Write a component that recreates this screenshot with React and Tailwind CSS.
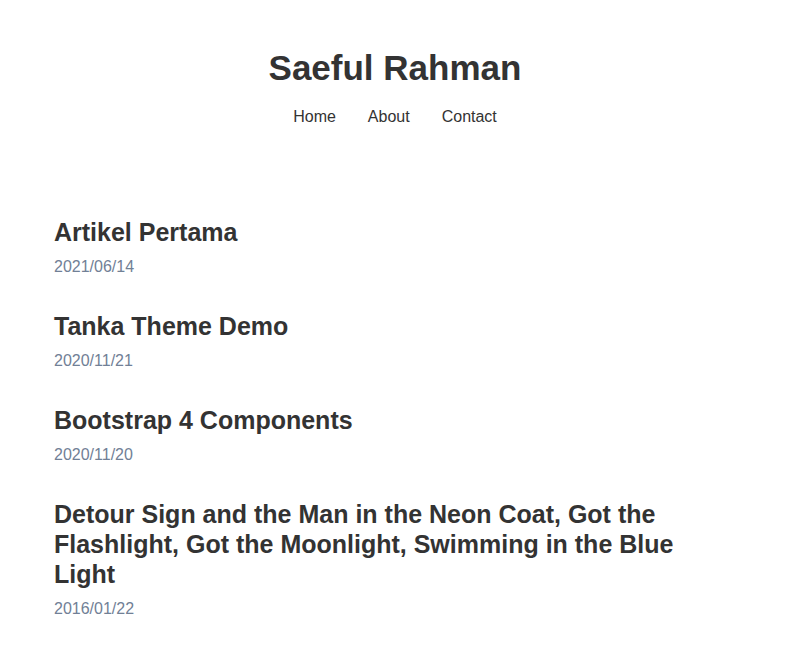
import React from "react";

const posts = [
  { title: "Artikel Pertama", date: "2021/06/14" },
  { title: "Tanka Theme Demo", date: "2020/11/21" },
  { title: "Bootstrap 4 Components", date: "2020/11/20" },
  {
    title:
      "Detour Sign and the Man in the Neon Coat, Got the Flashlight, Got the Moonlight, Swimming in the Blue Light",
    date: "2016/01/22",
  },
];

export default function App() {
  return (
    <div
      className="min-h-screen bg-white text-[#333]"
      style={{ fontFamily: '"Liberation Sans", Arial, sans-serif' }}
    >
      {/* Header */}
      <header className="flex flex-col items-center pt-[46px] pr-[5px]">
        <h1 className="text-[35px] font-bold leading-[43px]">Saeful Rahman</h1>
        <nav className="mt-[16px] flex gap-8 text-base leading-6">
          <a href="#">Home</a>
          <a href="#">About</a>
          <a href="#">Contact</a>
        </nav>
      </header>

      {/* Post list */}
      <main className="px-[54px] pt-[88px]">
        {posts.map((p, i) => (
          <article key={i} className="mb-[32px]">
            <h2 className="text-[25px] font-bold leading-[30px]">{p.title}</h2>
            <div className="mt-[8px] text-base leading-6 text-[#718096]">{p.date}</div>
          </article>
        ))}
      </main>
    </div>
  );
}
